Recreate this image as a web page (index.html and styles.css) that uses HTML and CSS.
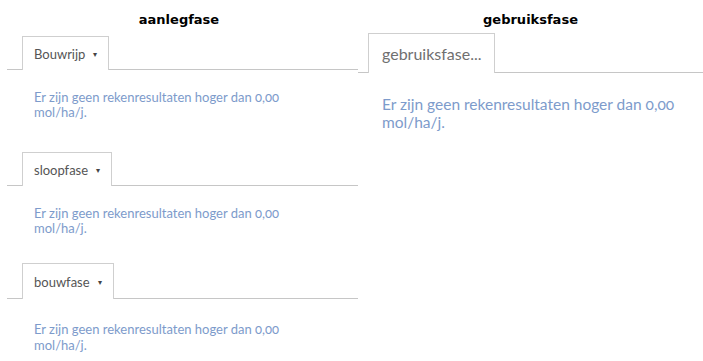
FILE: index.html
```html
<!DOCTYPE html>
<html lang="nl">
<head>
    <meta charset="UTF-8">
    <meta name="viewport" content="width=device-width, initial-scale=1.0">
    <title>Rekenresultaten per fase</title>
    <link rel="stylesheet" href="styles.css">
</head>
<body>
    <div class="page">
        <section class="column">
            <h2 class="column-title">aanlegfase</h2>

            <div class="phase phase-first">
                <div class="tabs">
                    <div class="tab">Bouwrijp <span class="caret">&#9662;</span></div>
                </div>
                <p class="empty">Er zijn geen rekenresultaten hoger dan 0,00 mol/ha/j.</p>
            </div>

            <div class="phase phase-second">
                <div class="tabs">
                    <div class="tab">sloopfase <span class="caret">&#9662;</span></div>
                </div>
                <p class="empty">Er zijn geen rekenresultaten hoger dan 0,00 mol/ha/j.</p>
            </div>

            <div class="phase phase-third">
                <div class="tabs">
                    <div class="tab tab-tall">bouwfase <span class="caret">&#9662;</span></div>
                </div>
                <p class="empty">Er zijn geen rekenresultaten hoger dan 0,00 mol/ha/j.</p>
            </div>
        </section>

        <section class="column column-right">
            <h2 class="column-title">gebruiksfase</h2>

            <div class="phase phase-large">
                <div class="tabs">
                    <div class="tab">gebruiksfase...</div>
                </div>
                <p class="empty">Er zijn geen rekenresultaten hoger dan 0,00 mol/ha/j.</p>
            </div>
        </section>
    </div>
</body>
</html>
```

FILE: styles.css
```css
/* Page */
body {
    margin: 0;
    background: #ffffff;
    font-family: 'Lato', 'Open Sans', sans-serif;
    color: #555555;
}

.page {
    display: grid;
    grid-template-columns: 358px 1fr;
}

/* Column headings */
.column-title {
    margin: 12px 0 0;
    font-family: 'DejaVu Sans', sans-serif;
    font-size: 13px;
    line-height: 16px;
    font-weight: bold;
    text-align: center;
    color: #000000;
}

/* Tab strip */
.tabs {
    display: flex;
    margin-left: 7px;
    padding-left: 15px;
    border-bottom: 1px solid #c6c6c6;
}

.tab {
    display: flex;
    align-items: center;
    gap: 8px;
    height: 33px;
    margin-bottom: -1px;
    padding: 0 11px;
    background: #ffffff;
    border: 1px solid #cfcfcf;
    border-bottom: none;
    font-size: 13px;
    color: #555555;
}

.tab-tall {
    height: 35px;
}

.caret {
    font-size: 8px;
    color: #444444;
}

/* Empty message */
.empty {
    margin: 20px 0 0 34px;
    max-width: 260px;
    font-size: 13px;
    line-height: 15px;
    font-variant-numeric: oldstyle-nums;
    color: #7d9bcb;
}

/* Phase spacing */
.phase-first {
    margin-top: 8px;
}

.phase-second {
    margin-top: 32px;
}

.phase-third {
    margin-top: 27px;
}

.phase-third .empty {
    margin-top: 22px;
    line-height: 16px;
}

/* Right column, larger */
.column-right .tabs {
    margin-left: 0;
    padding-left: 10px;
}

.phase-large {
    margin-top: 5px;
}

.phase-large .tab {
    height: 39px;
    padding: 0 13px 0 13px;
    font-size: 16px;
    color: #707070;
}

.phase-large .empty {
    margin: 22px 0 0 24px;
    max-width: 310px;
    font-size: 15.5px;
    line-height: 18px;
}
```
